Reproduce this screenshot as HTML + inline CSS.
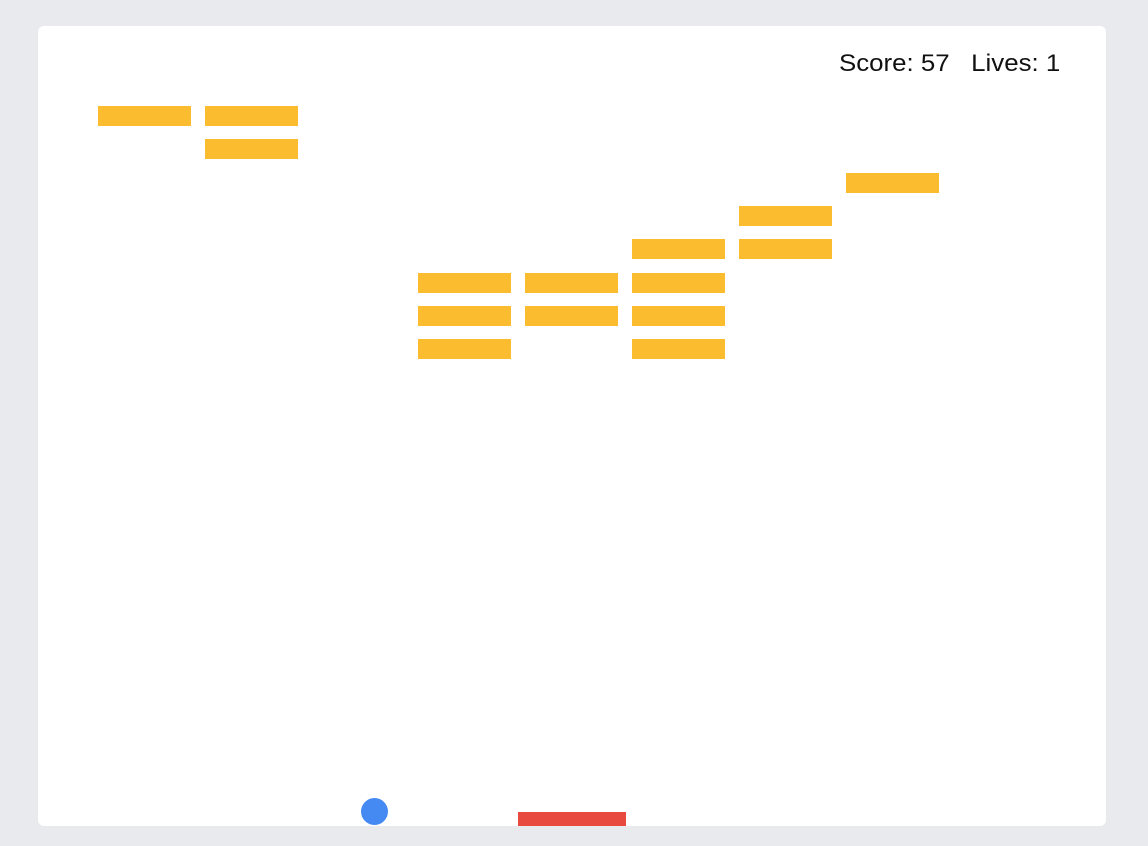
<!DOCTYPE html>
<html><head><style>
body{margin:0;width:1148px;height:846px;background:#e8eaed;position:relative;overflow:hidden;font-family:"Liberation Sans",Arial,sans-serif}
#c{position:absolute;left:38px;top:26px;width:1068px;height:800px;background:#fff;border-radius:6px;overflow:hidden}
.b{position:absolute;width:93px;height:20px;background:#fbbc2f}
#t{position:absolute;left:801px;top:24px;font-size:24px;color:#111;white-space:pre;transform:scaleX(1.077);transform-origin:left top}
</style></head><body><div id="c">
<div id="t">Score: 57   Lives: 1</div>
<div class="b" style="left:60px;top:80px"></div>
<div class="b" style="left:167px;top:80px"></div>
<div class="b" style="left:167px;top:113px"></div>
<div class="b" style="left:808px;top:147px"></div>
<div class="b" style="left:701px;top:180px"></div>
<div class="b" style="left:701px;top:213px"></div>
<div class="b" style="left:594px;top:213px"></div>
<div class="b" style="left:594px;top:247px"></div>
<div class="b" style="left:594px;top:280px"></div>
<div class="b" style="left:594px;top:313px"></div>
<div class="b" style="left:487px;top:247px"></div>
<div class="b" style="left:487px;top:280px"></div>
<div class="b" style="left:380px;top:247px"></div>
<div class="b" style="left:380px;top:280px"></div>
<div class="b" style="left:380px;top:313px"></div>
<div style="position:absolute;left:323px;top:772px;width:27px;height:27px;border-radius:50%;background:#4589f3"></div>
<div style="position:absolute;left:480px;top:786px;width:108px;height:14px;background:#e84a3f"></div>
</div></body></html>
